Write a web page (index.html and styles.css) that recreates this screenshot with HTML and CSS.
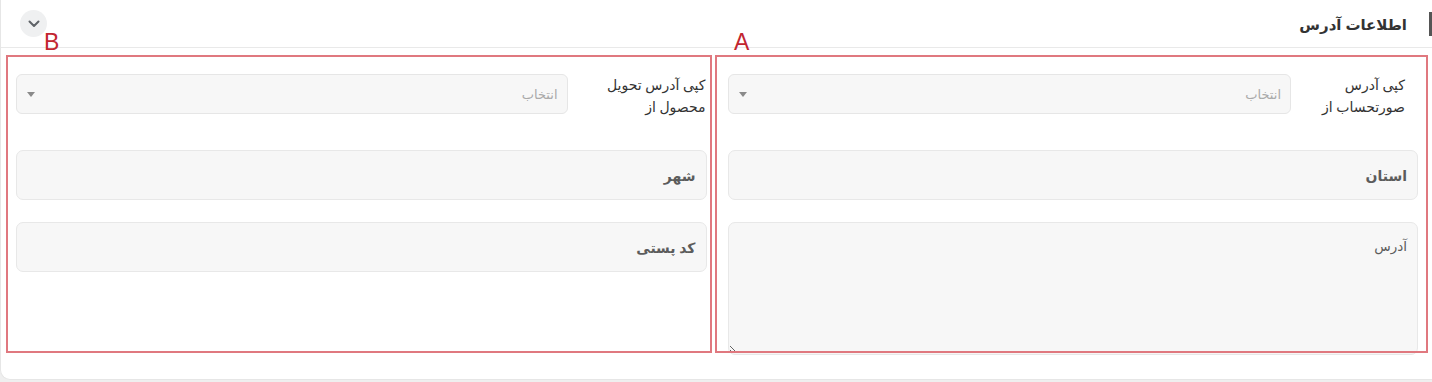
FILE: index.html
```html
<!DOCTYPE html>
<html lang="fa" dir="rtl">
<head>
    <meta charset="utf-8">
    <title>اطلاعات آدرس</title>
    <link rel="stylesheet" href="styles.css">
</head>
<body>
    <div class="kart">
        <div class="sarbarg">
            <h2 class="onvan">اطلاعات آدرس</h2>
            <button class="dokme-jam" type="button">
                <svg width="12" height="8" viewBox="0 0 12 8"><path d="M1.5 1.5 L6 6 L10.5 1.5" fill="none" stroke="#5f6368" stroke-width="2" stroke-linecap="round" stroke-linejoin="round"/></svg>
            </button>
        </div>
        <div class="badane">
            <div class="sotun">
                <div class="radif-entekhab">
                    <label class="barchasb barchasb-a">کپی آدرس<br>صورتحساب از</label>
                    <div class="entekhab"><span>انتخاب</span><i class="felesh"></i></div>
                </div>
                <input class="vorudi" type="text" placeholder="استان">
                <textarea class="vorudi matn" placeholder="آدرس"></textarea>
            </div>
            <div class="sotun">
                <div class="radif-entekhab">
                    <label class="barchasb barchasb-b">کپی آدرس تحویل<br>محصول از</label>
                    <div class="entekhab"><span>انتخاب</span><i class="felesh"></i></div>
                </div>
                <input class="vorudi" type="text" placeholder="شهر">
                <input class="vorudi" type="text" placeholder="کد پستی">
            </div>
        </div>
    </div>
    <!-- annotation marks -->
    <div class="alamat alamat-a"></div>
    <div class="alamat alamat-b"></div>
    <span class="harf harf-a">A</span>
    <span class="harf harf-b">B</span>
</body>
</html>
```

FILE: styles.css
```css
* {
    box-sizing: border-box;
}
body {
    margin: 0;
    background-color: #efefef;
    font-family: "Noto Sans", "DejaVu Sans", sans-serif;
    color: #333;
    position: relative;
    height: 382px;
    overflow: hidden;
}
.kart {
    background-color: #fff;
    border: 1px solid #e6e6e6;
    border-right: none;
    border-top: none;
    border-radius: 0 0 0 10px;
    height: 380px;
}
.sarbarg {
    height: 48px;
    display: flex;
    align-items: center;
    border-bottom: 1px solid #e9e9e9;
    padding: 0 0 0 19px;
}
.onvan {
    margin: 0;
    font-size: 15px;
    font-weight: bold;
    color: #333;
    padding-right: 22px;
    border-right: 3px solid #555;
    line-height: 24px;
}
.dokme-jam {
    width: 27px;
    height: 27px;
    border-radius: 50%;
    border: none;
    background-color: #eff0f1;
    display: flex;
    align-items: center;
    justify-content: center;
    padding: 0;
    margin: 0 auto 0 0;
}
.badane {
    display: flex;
    gap: 21px;
    padding: 26px 14px 22px 15px;
}
.sotun {
    flex: 1;
    display: flex;
    flex-direction: column;
}
.radif-entekhab {
    display: flex;
    align-items: flex-start;
    height: 40px;
    margin-bottom: 36px;
}
.barchasb {
    font-size: 14px;
    line-height: 22px;
    color: #333;
    flex: none;
}
.barchasb-a {
    width: 127px;
    padding-right: 13px;
}
.barchasb-b {
    width: 139px;
    padding-right: 1px;
}
.entekhab {
    flex: 1;
    height: 40px;
    background-color: #f7f7f7;
    border: 1px solid #e6e6e6;
    border-radius: 6px;
    display: flex;
    align-items: center;
    justify-content: space-between;
    padding: 0 9px 0 10px;
    font-size: 13px;
    color: #a9a9a9;
}
.felesh {
    width: 0;
    height: 0;
    border-left: 4px solid transparent;
    border-right: 4px solid transparent;
    border-top: 5px solid #8a8a8a;
}
.vorudi {
    height: 50px;
    background-color: #f7f7f7;
    border: 1px solid #e8e8e8;
    border-radius: 7px;
    padding: 0 10px;
    margin: 0 0 22px 0;
    font-family: inherit;
    font-size: 14px;
    color: #333;
    outline: none;
}
.vorudi::placeholder {
    color: #5c5c5c;
    font-weight: 600;
}
.matn {
    height: 133px;
    padding-top: 14px;
    resize: vertical;
    margin-bottom: 0;
}
.matn::placeholder {
    font-weight: normal;
    font-size: 13.5px;
}
.alamat {
    position: absolute;
    top: 55px;
    height: 298px;
    border: 2px solid #e0787f;
}
.alamat-a {
    left: 715px;
    width: 713px;
}
.alamat-b {
    left: 6px;
    width: 706px;
}
.harf {
    position: absolute;
    top: 29px;
    font-family: "Liberation Sans", sans-serif;
    font-size: 23px;
    color: #c22630;
    line-height: 26px;
}
.harf-a {
    left: 734px;
}
.harf-b {
    left: 44px;
}
```
